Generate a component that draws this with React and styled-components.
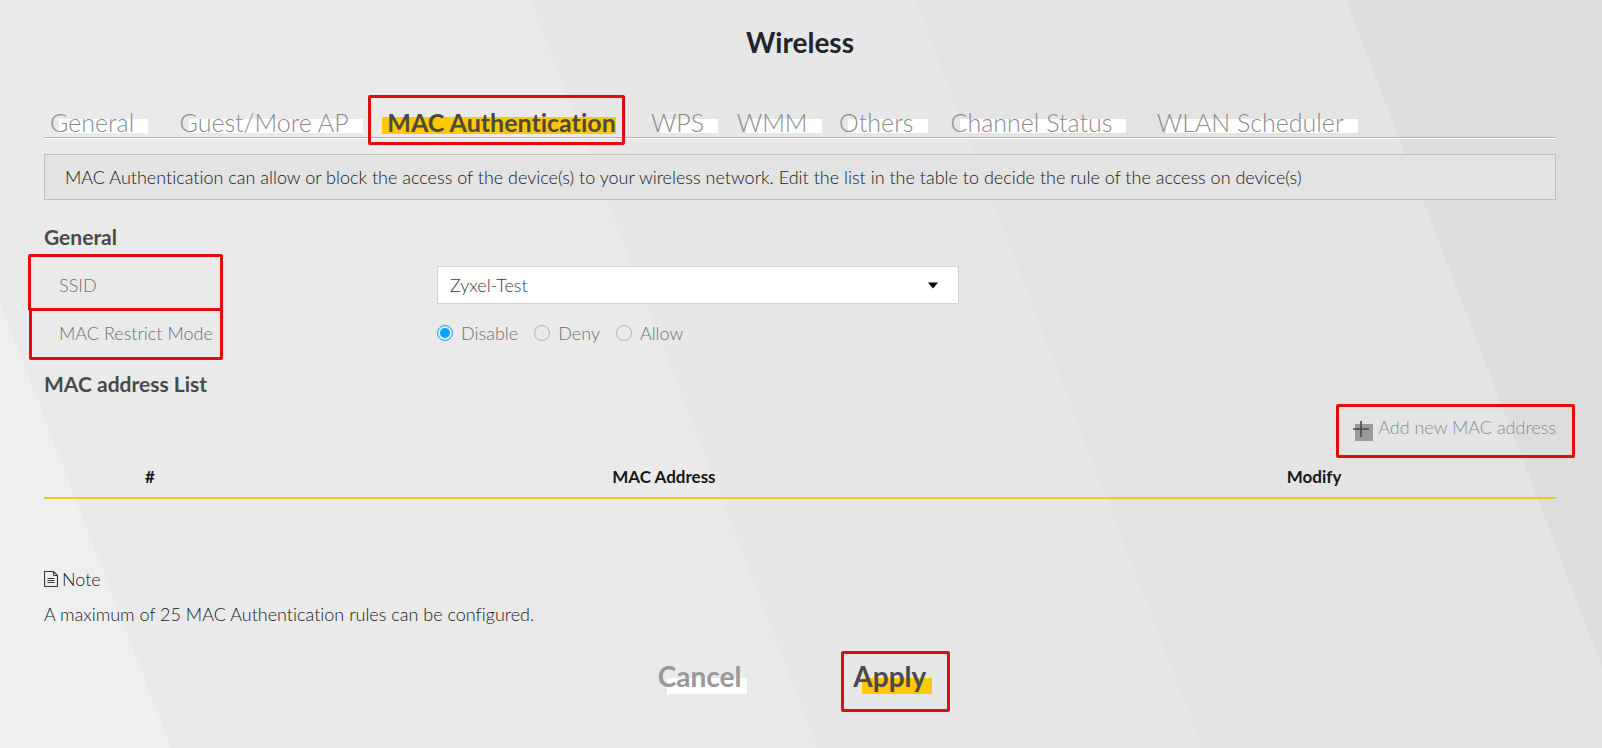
import { useState } from 'react';
import styled, { createGlobalStyle } from 'styled-components';

const GlobalStyle = createGlobalStyle`
  * {
    box-sizing: border-box;
  }

  body {
    margin: 0;
    color: #15181b;
    font-family: Lato, 'Century Gothic', sans-serif;
    font-size: 18px;
    font-weight: 300;
    font-variant-ligatures: none;
    line-height: 24px;
  }

  button, input, select {
    font: inherit;
  }
`;

const Page = styled.div`
  min-height: 100vh;
  padding: 24px 46px 54px 44px;
  background: linear-gradient(
    69deg,
    #efefef 9%,
    #eaeaea 9.1%,
    #eaeaea 43.2%,
    #e7e7e7 43.3%,
    #e7e7e7 63.6%,
    #e4e4e4 63.7%,
    #e4e4e4 86.4%,
    #dddddd 86.5%
  );
`;

const Title = styled.h1`
  margin: 0;
  color: #212529;
  font-size: 28px;
  font-weight: 700;
  line-height: 36px;
  text-align: center;
`;

// tabs
const TabBar = styled.nav`
  display: grid;
  grid-template-columns: 8.6% 13.8% 17.5% 5.7% 6.8% 7.4% 13.7% auto;
  justify-items: start;
  margin-top: 47px;
  padding-left: 6px;
  border-bottom: 1px solid #b4b4b4;
  box-shadow: 0 1px 0 #fff;
`;

const Tab = styled.a`
  position: relative;
  z-index: 0;
  color: ${(props) => (props.$active ? '#4a4a42' : '#8c8c8c')};
  font-size: 25px;
  font-weight: ${(props) => (props.$active ? 700 : 300)};
  line-height: 30px;
  white-space: nowrap;
  text-decoration: none;

  // the block behind the text
  &::before {
    content: '';
    position: absolute;
    z-index: -1;
    top: ${(props) => (props.$active ? 10 : 12)}px;
    bottom: ${(props) => (props.$active ? 3 : 4)}px;
    left: ${(props) => (props.$active ? -5 : 9)}px;
    right: ${(props) => (props.$active ? 0 : -14)}px;
    background-color: ${(props) => (props.$active ? '#ffc800' : '#fff')};
  }
`;

// red frame drawn over a part of the page
const Frame = styled.span`
  position: absolute;
  inset: ${(props) => props.$inset};
  border: 3px solid #e20c0c;
  border-radius: 2px;
  pointer-events: none;
`;

const Notice = styled.p`
  margin: 16px 0 0;
  padding: 10px 20px;
  border: 1px solid #bfbfbf;
  background-color: #e3e3e3;
`;

const Heading = styled.h2`
  margin: ${(props) => props.$top}px 0 0;
  color: #4a4a4a;
  font-size: 21px;
  font-weight: 700;
  line-height: 30px;
`;

const Field = styled.div`
  display: grid;
  grid-template-columns: 26% 34.5%;
  align-items: center;
  min-height: 38px;
  margin-top: ${(props) => props.$top}px;
  color: #707070;
`;

const FieldName = styled.div`
  position: relative;
  width: 194px;
  margin-left: -15px;
  padding-left: 30px;
  line-height: 38px;
  white-space: nowrap;
`;

const SelectBox = styled.div`
  position: relative;

  svg {
    position: absolute;
    top: 16px;
    right: 21px;
    pointer-events: none;
  }
`;

const Select = styled.select`
  display: block;
  width: 100%;
  height: 38px;
  padding: 0 12px;
  appearance: none;
  border: 1px solid #ced4da;
  border-radius: 0;
  background-color: #fff;
  color: #343a40;
`;

const Radios = styled.div`
  display: flex;
  gap: 16px;

  label {
    display: flex;
    align-items: center;
    gap: 8px;
  }
`;

const Radio = styled.input.attrs({ type: 'radio' })`
  width: 16px;
  height: 16px;
  margin: 0;
  appearance: none;
  border: 1px solid #b3b3b3;
  border-radius: 50%;

  &:checked {
    padding: 2px;
    border-color: #00a8ff;
    background: #00a8ff content-box;
  }
`;

const Actions = styled.div`
  display: flex;
  justify-content: flex-end;
  margin-top: 14px;
`;

const AddButton = styled.button`
  position: relative;
  display: flex;
  align-items: center;
  gap: 5px;
  height: 28px;
  padding: 0;
  border: 0;
  background: none;
  color: #8c8c8c;

  svg {
    margin-top: 7px;
  }
`;

const Table = styled.table`
  width: 100%;
  margin-top: 19px;
  table-layout: fixed;
  border-collapse: collapse;
  border-bottom: 2px solid #f5c518;

  th {
    padding: 5px 0 8px;
    font-size: 17px;
    font-weight: 700;
    text-align: center;
  }
`;

const Column = styled.col`
  width: ${(props) => props.$width};
`;

const NoteTitle = styled.div`
  display: flex;
  align-items: center;
  gap: 4px;
  margin-top: 68px;
`;

const NoteText = styled.p`
  margin: 11px 0 0;
`;

const Buttons = styled.div`
  display: flex;
  justify-content: center;
  gap: 96px;
  margin-top: 32px;
`;

const Button = styled.button`
  position: relative;
  z-index: 0;
  padding: 0 16px 0 0;
  border: 0;
  background: none;
  color: ${(props) => (props.$primary ? '#4a4a4a' : '#999')};
  font-size: 28px;
  font-weight: 700;
  line-height: 36px;

  &::before {
    content: '';
    position: absolute;
    z-index: -1;
    inset: 20px 10px 0 9px;
    background-color: ${(props) => (props.$primary ? '#ffc800' : '#fff')};
  }
`;

const tabs = [
  'General',
  'Guest/More AP',
  'MAC Authentication',
  'WPS',
  'WMM',
  'Others',
  'Channel Status',
  'WLAN Scheduler',
];

const modes = ['Disable', 'Deny', 'Allow'];

function ArrowIcon() {
  return (
    <svg width="10" height="7" viewBox="0 0 10 7" aria-hidden="true">
      <path d="M0 0.5h10L5 6.5z" fill="#000" />
    </svg>
  );
}

function PlusIcon() {
  return (
    <svg width="20" height="22" viewBox="0 0 20 22" aria-hidden="true">
      <path d="M2 4h18v17H2z" fill="#999" />
      <path d="M0 9h16M8 1v16" stroke="#4a4a42" strokeWidth="1.6" fill="none" />
    </svg>
  );
}

function NoteIcon() {
  return (
    <svg width="14" height="16" viewBox="0 0 14 16" fill="none" stroke="#343a40" aria-hidden="true">
      <path d="M0.5 0.5h9l4 4v11h-13z" strokeWidth="1.2" />
      <path d="M9.5 0.5v4h4M3.5 7.5h7M3.5 9.5h7M3.5 11.5h7" />
    </svg>
  );
}

export default function App() {
  const [active, setActive] = useState('MAC Authentication');
  const [mode, setMode] = useState('Disable');

  return (
    <>
      <GlobalStyle />
      <Page>
        <Title>Wireless</Title>

        <TabBar>
          {tabs.map((tab) => (
            <Tab key={tab} href="#" $active={tab === active} onClick={() => setActive(tab)}>
              {tab}
              {tab === 'MAC Authentication' && <Frame $inset="-12px -9px -8px -19px" />}
            </Tab>
          ))}
        </TabBar>

        <Notice>
          MAC Authentication can allow or block the access of the device(s) to your wireless
          network. Edit the list in the table to decide the rule of the access on device(s)
        </Notice>

        <Heading $top={22}>General</Heading>
        <Field $top={14}>
          <FieldName>
            <label htmlFor="ssid">SSID</label>
            <Frame $inset="-12px 0 -7px -1px" />
          </FieldName>
          <SelectBox>
            <Select id="ssid">
              <option>Zyxel-Test</option>
            </Select>
            <ArrowIcon />
          </SelectBox>
        </Field>
        <Field $top={10}>
          <FieldName id="mode">
            MAC Restrict Mode
            <Frame $inset="-6px 0 -8px 0" />
          </FieldName>
          <Radios role="radiogroup" aria-labelledby="mode">
            {modes.map((item) => (
              <label key={item}>
                <Radio name="mode" checked={mode === item} onChange={() => setMode(item)} />
                {item}
              </label>
            ))}
          </Radios>
        </Field>

        <Heading $top={17}>MAC address List</Heading>
        <Actions>
          <AddButton type="button">
            <PlusIcon />
            Add new MAC address
            <Frame $inset="-9px -19px -17px -17px" />
          </AddButton>
        </Actions>

        <Table>
          <colgroup>
            <Column $width="14%" />
            <Column $width="54%" />
            <Column $width="32%" />
          </colgroup>
          <thead>
            <tr>
              <th>#</th>
              <th>MAC Address</th>
              <th>Modify</th>
            </tr>
          </thead>
        </Table>

        <NoteTitle>
          <NoteIcon />
          Note
        </NoteTitle>
        <NoteText>A maximum of 25 MAC Authentication rules can be configured.</NoteText>

        <Buttons>
          <Button type="button">Cancel</Button>
          <Button type="button" $primary>
            Apply
            <Frame $inset="-7px -8px -18px -12px" />
          </Button>
        </Buttons>
      </Page>
    </>
  );
}
